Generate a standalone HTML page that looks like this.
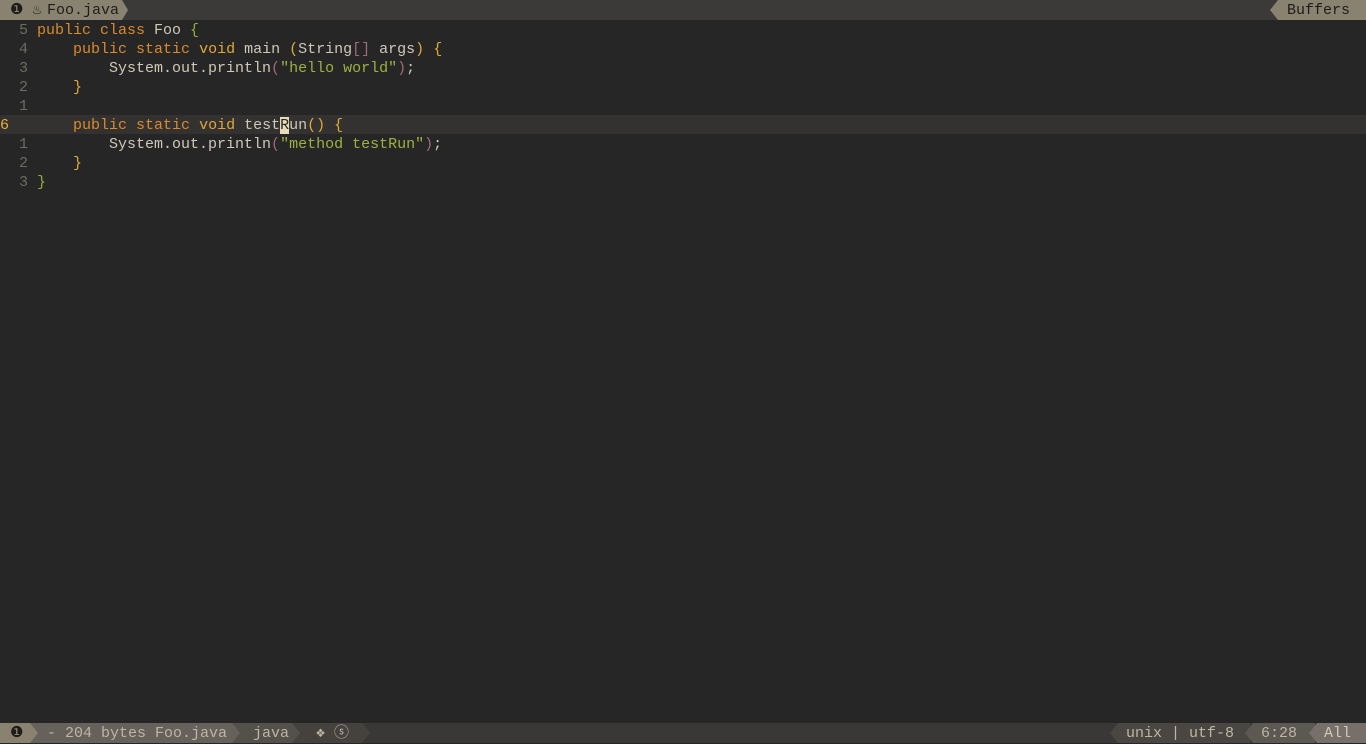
<!DOCTYPE html>
<html><head><meta charset="utf-8"><style>
*{margin:0;padding:0;box-sizing:border-box}
body{width:1366px;height:743px;background:#262626;overflow:hidden;position:relative;font-family:"Liberation Mono","DejaVu Sans Mono",monospace;font-size:15px;color:#d0c8b8}
.top{position:absolute;left:0;top:0;width:1366px;height:20px;background:#3c3a38}
.seg{position:absolute;height:20px;line-height:21px;white-space:pre}
.line{position:absolute;left:0;width:1366px;height:19px;line-height:21px;white-space:pre}
.ln{position:absolute;left:0;width:28px;text-align:right;color:#6e6a62}
.code{position:absolute;left:37px}
.k{color:#d98a2c}.y{color:#e0a838}.s{color:#a0b040}.g{color:#8fae3a}.p{color:#a06878}
.status{position:absolute;left:0;top:723px;width:1366px;height:20px;background:#3a3836;color:#bdb5a5}
</style></head><body>
<div class="top">
 <div class="seg" style="left:0;width:128px;background:#8a8270;color:#1e1c1a;clip-path:polygon(0 0,122px 0,128px 10px,122px 20px,0 20px);padding-left:10px">❶ ♨<span style="position:absolute;left:47px">Foo.java</span></div>
 <div class="seg" style="left:1270px;width:96px;background:#8a8270;color:#1e1c1a;clip-path:polygon(8px 0,100% 0,100% 100%,8px 100%,0 10px);padding-left:17px">Buffers</div>
</div>
<div class="line" style="top:20px"><span class="ln">5</span><span class="code"><span class="k">public class</span> Foo <span class="g">{</span></span></div>
<div class="line" style="top:39px"><span class="ln">4</span><span class="code">    <span class="k">public static</span> <span class="y">void</span> main <span class="y">(</span>String<span class="p">[]</span> args<span class="y">)</span> <span class="y">{</span></span></div>
<div class="line" style="top:58px"><span class="ln">3</span><span class="code">        System.out.println<span class="p">(</span><span class="s">"hello world"</span><span class="p">)</span>;</span></div>
<div class="line" style="top:77px"><span class="ln">2</span><span class="code">    <span class="y">}</span></span></div>
<div class="line" style="top:96px"><span class="ln">1</span></div>
<div class="line" style="top:115px;background:#333230"><span class="ln" style="left:0;width:10px;text-align:left;color:#e8b040">6</span><span class="code">    <span class="k">public static</span> <span class="y">void</span> test<span style="background:#e8dcb8;color:#262626">R</span>un<span class="y">()</span> <span class="y">{</span></span></div>
<div class="line" style="top:134px"><span class="ln">1</span><span class="code">        System.out.println<span class="p">(</span><span class="s">"method testRun"</span><span class="p">)</span>;</span></div>
<div class="line" style="top:153px"><span class="ln">2</span><span class="code">    <span class="y">}</span></span></div>
<div class="line" style="top:172px"><span class="ln">3</span><span class="code"><span class="g">}</span></span></div>
<div class="status">
 <div class="seg" style="left:350px;width:20px;background:#45423e;clip-path:polygon(0 0,12px 0,20px 10px,12px 20px,0 20px)"></div>
 <div class="seg" style="left:290px;width:72px;background:#45423e;clip-path:polygon(0 0,64px 0,72px 10px,64px 20px,0 20px);padding-left:26px">❖ ⓢ</div>
 <div class="seg" style="left:230px;width:70px;background:#54504a;clip-path:polygon(0 0,62px 0,70px 10px,62px 20px,0 20px);padding-left:23px">java</div>
 <div class="seg" style="left:30px;width:210px;background:#66615a;clip-path:polygon(0 0,202px 0,210px 10px,202px 20px,0 20px);padding-left:17px">- 204 bytes Foo.java</div>
 <div class="seg" style="left:0;width:38px;background:#8a8270;color:#1e1c1a;clip-path:polygon(0 0,30px 0,38px 10px,30px 20px,0 20px);padding-left:10px">❶</div>
 <div class="seg" style="left:1110px;width:140px;background:#4a4742;clip-path:polygon(8px 0,100% 0,100% 100%,8px 100%,0 10px);padding-left:16px">unix | utf-8</div>
 <div class="seg" style="left:1245px;width:70px;background:#5c5852;clip-path:polygon(8px 0,100% 0,100% 100%,8px 100%,0 10px);padding-left:16px">6:28</div>
 <div class="seg" style="left:1309px;width:57px;background:#77706a;clip-path:polygon(8px 0,100% 0,100% 100%,8px 100%,0 10px);padding-left:15px;color:#d0c8b8">All</div>
</div>
</body></html>
